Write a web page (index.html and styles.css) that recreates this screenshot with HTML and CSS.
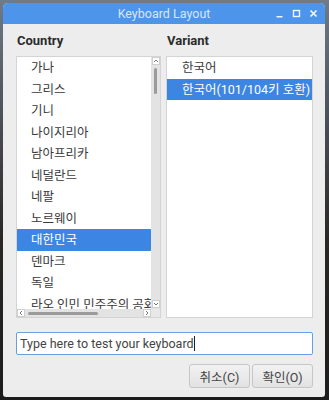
FILE: index.html
```html
<!DOCTYPE html>
<html>

<head>
    <meta charset="UTF-8">
    <link rel="stylesheet" href="styles.css">
</head>

<body>
    <div class="window">
        <div class="titlebar">
            <span class="title">Keyboard Layout</span>
            <div class="win-buttons">
                <svg width="9" height="9" viewBox="0 0 9 9"><rect x="1.5" y="7" width="6" height="1.5" fill="#f2f6fd"/></svg>
                <svg width="9" height="9" viewBox="0 0 9 9"><rect x="1.5" y="1.5" width="6" height="6" fill="none" stroke="#f2f6fd" stroke-width="1.4"/></svg>
                <svg width="9" height="9" viewBox="0 0 9 9"><path d="M1.5 1.5 L7.5 7.5 M7.5 1.5 L1.5 7.5" stroke="#f2f6fd" stroke-width="1.7"/></svg>
            </div>
        </div>

        <div class="content">
            <div class="columns">
                <div class="column country">
                    <h3>Country</h3>
                    <div class="list-box scrolled">
                        <div class="list">
                            <div class="row">가나</div>
                            <div class="row">그리스</div>
                            <div class="row">기니</div>
                            <div class="row">나이지리아</div>
                            <div class="row">남아프리카</div>
                            <div class="row">네덜란드</div>
                            <div class="row">네팔</div>
                            <div class="row">노르웨이</div>
                            <div class="row selected">대한민국</div>
                            <div class="row">덴마크</div>
                            <div class="row">독일</div>
                            <div class="row">라오 인민 민주주의 공화국</div>
                        </div>
                        <div class="vscroll">
                            <span class="arrow"><svg width="6" height="6" viewBox="0 0 6 6"><path d="M1 4 L3 2 L5 4" fill="none" stroke="#777" stroke-width="1"/></svg></span>
                            <div class="vthumb"></div>
                            <span class="arrow down"><svg width="6" height="6" viewBox="0 0 6 6"><path d="M1 2 L3 4 L5 2" fill="none" stroke="#777" stroke-width="1"/></svg></span>
                        </div>
                        <div class="hscroll">
                            <span class="arrow"><svg width="6" height="6" viewBox="0 0 6 6"><path d="M4 1 L2 3 L4 5" fill="none" stroke="#777" stroke-width="1"/></svg></span>
                            <div class="hthumb"></div>
                            <span class="arrow right"><svg width="6" height="6" viewBox="0 0 6 6"><path d="M2 1 L4 3 L2 5" fill="none" stroke="#777" stroke-width="1"/></svg></span>
                        </div>
                        <div class="corner"></div>
                    </div>
                </div>
                <div class="column variant">
                    <h3>Variant</h3>
                    <div class="list-box">
                        <div class="list">
                            <div class="row">한국어</div>
                            <div class="row selected">한국어(101/104키 호환)</div>
                        </div>
                    </div>
                </div>
            </div>

            <div class="test-entry">Type here to test your keyboard<span class="caret"></span></div>

            <div class="actions">
                <button>취소(C)</button>
                <button>확인(O)</button>
            </div>
        </div>
    </div>
</body>
</html>
```

FILE: styles.css
```css
:root {
    --accent: #4d95ea;
    --select: #3d85e2;
    --window-bg: #ededed;
    --text: #3a3a3a;
}

body {
    margin: 0;
    width: 329px;
    height: 400px;
    overflow: hidden;
    background: linear-gradient(180deg, #6f7b89 0%, #4b4f58 30%, #2a2724 60%, #1d1c1c 100%);
    font-family: Roboto, "Noto Sans CJK KR", sans-serif;
    font-size: 12px;
    color: var(--text);
}

.window {
    margin: 3px 4px 3px 3px;
    height: 394px;
    background: var(--window-bg);
    border-radius: 5px 5px 3px 3px;
    overflow: hidden;
    display: flex;
    flex-direction: column;
}

.titlebar {
    height: 21px;
    background: var(--accent);
    display: flex;
    align-items: center;
    justify-content: center;
    position: relative;
}

.title {
    color: #d6e6fa;
    font-size: 12.5px;
}

.win-buttons {
    position: absolute;
    right: 7px;
    top: 6px;
    display: flex;
    gap: 8px;
}

.content {
    flex: 1;
    padding: 9px 12px 8px 13px;
    display: flex;
    flex-direction: column;
}

.columns {
    display: flex;
    gap: 5px;
}

.column {
    display: flex;
    flex-direction: column;
}

.country {
    width: 145px;
}

.variant {
    flex: 1;
}

h3 {
    margin: 0 0 8px 0;
    font-size: 13px;
    font-weight: 700;
    color: #2b2b2b;
    line-height: 15px;
    padding-left: 1px;
}

.list-box {
    height: 260px;
    background: #fff;
    border: 1px solid #d4d4d4;
    overflow: hidden;
}

.list-box.scrolled {
    display: grid;
    grid-template-columns: 1fr 9px;
    grid-template-rows: 1fr 8px;
}

.list {
    overflow: hidden;
}

.row {
    height: 21.5px;
    line-height: 21.5px;
    padding-left: 14px;
    white-space: nowrap;
    font-size: 12.5px;
}

.row.selected {
    background: var(--select);
    color: #fff;
}

.vscroll {
    background: #e3e3e3;
    display: flex;
    flex-direction: column;
    align-items: center;
}

.arrow {
    width: 8px;
    height: 8px;
    background: #fff;
    border: 1px solid #cfcfcf;
    box-sizing: border-box;
    display: flex;
    align-items: center;
    justify-content: center;
}

.vscroll .arrow.down {
    margin-top: auto;
    margin-bottom: 1px;
}

.vthumb {
    width: 3px;
    height: 26px;
    margin-top: 3px;
    border-radius: 2px;
    background: #9b9b9b;
}

.hscroll {
    background: #e3e3e3;
    display: flex;
    align-items: center;
}

.hthumb {
    width: 70px;
    height: 3px;
    margin-left: 3px;
    border-radius: 2px;
    background: #9b9b9b;
}

.hscroll .arrow.right {
    margin-left: auto;
}

.corner {
    background: #e8e8e8;
}

.variant .row {
    padding-left: 15px;
}

.test-entry {
    margin-top: 14px;
    height: 23px;
    box-sizing: border-box;
    border: 1px solid #6b9ee0;
    border-radius: 2px;
    background: #fff;
    padding-left: 3px;
    line-height: 21px;
    font-size: 12.5px;
    color: #444;
    display: flex;
    align-items: center;
}

.caret {
    width: 1px;
    height: 15px;
    background: #222;
}

.actions {
    margin-top: 9px;
    display: flex;
    justify-content: flex-end;
    gap: 2px;
}

button {
    width: 61px;
    height: 24px;
    border: 1px solid #c6c6c6;
    border-radius: 3px;
    background: linear-gradient(180deg, #f2f2f2 0%, #e2e2e2 100%);
    font-family: Roboto, "Noto Sans CJK KR", sans-serif;
    font-size: 12.5px;
    color: #444;
    padding: 0;
}
```
